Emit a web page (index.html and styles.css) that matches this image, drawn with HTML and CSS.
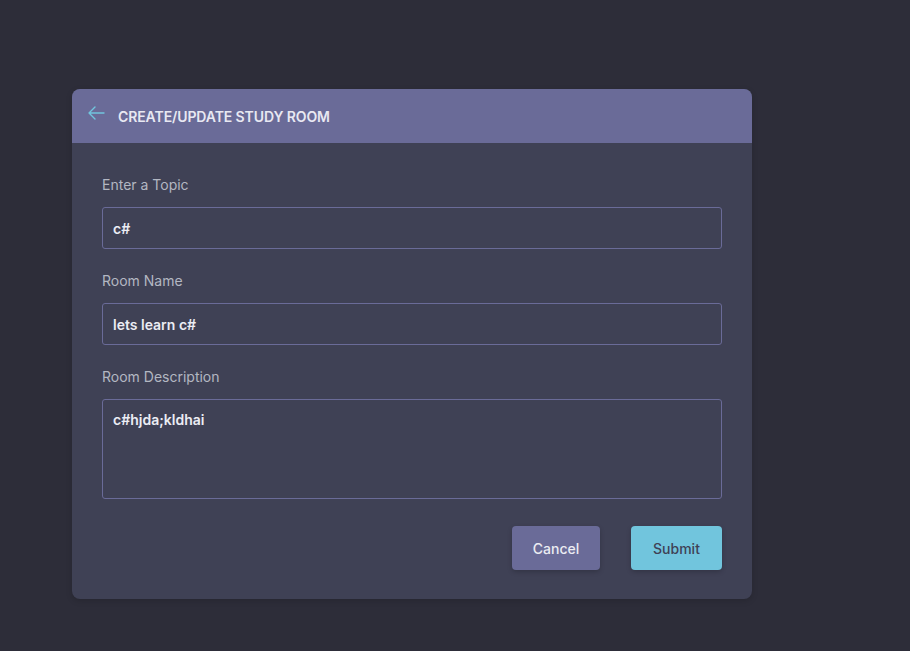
FILE: index.html
```html
<!DOCTYPE html>
<html>
<head>
<meta charset="utf-8">
<link rel="stylesheet" href="styles.css">
</head>
<body>
<div class="page">
  <div class="card">
    <div class="card-header">
      <svg class="back" width="20" height="16" viewBox="0 0 20 16"><path d="M9 2 L3 8 L9 14 M3 8 H18" fill="none" stroke="#71c5dd" stroke-width="1.4" stroke-linecap="round" stroke-linejoin="round"/></svg>
      <h3 class="title">CREATE/UPDATE STUDY ROOM</h3>
    </div>
    <form class="card-body">
      <div class="group">
        <label class="label">Enter a Topic</label>
        <input class="field" type="text" value="c#">
      </div>
      <div class="group">
        <label class="label">Room Name</label>
        <input class="field" type="text" value="lets learn c#">
      </div>
      <div class="group last">
        <label class="label">Room Description</label>
        <textarea class="field area">c#hjda;kldhai</textarea>
      </div>
      <div class="actions">
        <button type="button" class="btn cancel">Cancel</button>
        <button type="button" class="btn submit">Submit</button>
      </div>
    </form>
  </div>
</div>
</body>
</html>
```
FILE: styles.css
```css
* { box-sizing: border-box; }
html, body { margin: 0; padding: 0; }
body {
  background: #2d2d39;
  font-family: Inter, "Noto Sans", sans-serif;
  width: 910px;
  height: 651px;
  overflow: hidden;
}
.page {
  padding: 89px 0 0 72px;
}
.card {
  width: 680px;
  background: #3f4155;
  border-radius: 8px;
  overflow: hidden;
  box-shadow: 0 2px 6px rgba(0,0,0,0.15);
}
.card-header {
  height: 54px;
  background: #6a6b98;
  display: flex;
  align-items: center;
  padding: 0 0 0 14px;
}
.back { margin-top: -6px; }
.title {
  margin: 0 0 0 12px;
  font-size: 14px;
  font-weight: 600;
  color: #e8e8f2;
  letter-spacing: -0.1px;
}
.card-body {
  padding: 32px 30px 29px 30px;
  display: flex;
  flex-direction: column;
}
.group {
  display: flex;
  flex-direction: column;
  margin-bottom: 22px;
}
.group.last { margin-bottom: 27px; }
.label {
  font-size: 14px;
  line-height: 20px;
  color: #b3b7c2;
  margin-bottom: 12px;
}
.field {
  width: 620px;
  height: 42px;
  background: #3f4155;
  border: 1px solid #6a6b98;
  border-radius: 3px;
  color: #ecedf4;
  font-family: Inter, "Noto Sans", sans-serif;
  font-size: 14px;
  font-weight: 600;
  padding: 0 10px;
  outline: none;
}
.area {
  height: 100px;
  padding: 10px 10px;
  resize: none;
  line-height: 20px;
  display: block;
}
.actions {
  display: flex;
  justify-content: flex-end;
  gap: 31px;
}
.btn {
  height: 44px;
  border: none;
  border-radius: 4px;
  font-family: Inter, "Noto Sans", sans-serif;
  font-size: 14px;
  font-weight: 500;
  box-shadow: 0 2px 5px rgba(0,0,0,0.2);
}
.cancel {
  width: 88px;
  background: #6a6b98;
  color: #ebebf2;
}
.submit {
  width: 91px;
  background: #71c5dd;
  color: #3f4155;
}
```
